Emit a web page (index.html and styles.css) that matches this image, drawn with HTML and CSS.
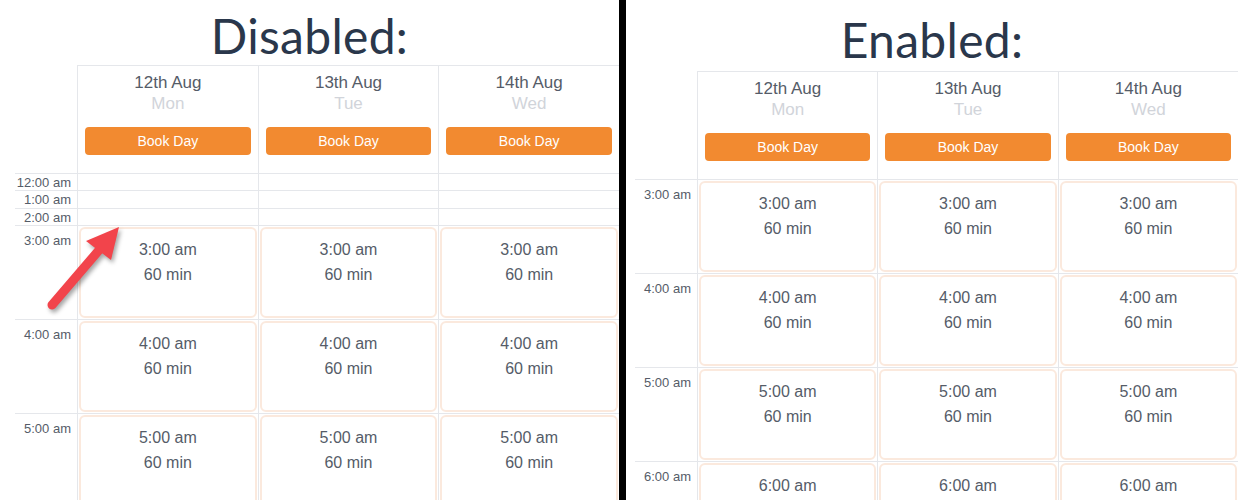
FILE: index.html
```html
<!DOCTYPE html>
<html lang="en">
<head>
    <meta charset="UTF-8">
    <title>Book Day - disabled vs enabled</title>
    <link rel="stylesheet" href="styles.css">
</head>
<body>
    <div class="page">
        <!-- left: empty slots hidden off -->
        <div class="panel panel-left">
            <h1 class="title">Disabled:</h1>
            <div class="cal">
                <div class="corner"></div>
                <div class="day-head">
                    <div class="date">12th Aug</div>
                    <div class="weekday">Mon</div>
                    <button class="book-btn">Book Day</button>
                </div>
                <div class="day-head">
                    <div class="date">13th Aug</div>
                    <div class="weekday">Tue</div>
                    <button class="book-btn">Book Day</button>
                </div>
                <div class="day-head">
                    <div class="date">14th Aug</div>
                    <div class="weekday">Wed</div>
                    <button class="book-btn">Book Day</button>
                </div>

                <div class="time time-small">12:00 am</div>
                <div class="cell cell-small"></div>
                <div class="cell cell-small"></div>
                <div class="cell cell-small"></div>

                <div class="time time-small">1:00 am</div>
                <div class="cell cell-small"></div>
                <div class="cell cell-small"></div>
                <div class="cell cell-small"></div>

                <div class="time time-small">2:00 am</div>
                <div class="cell cell-small"></div>
                <div class="cell cell-small"></div>
                <div class="cell cell-small"></div>

                <div class="time">3:00 am</div>
                <div class="cell"><div class="slot">3:00 am<br>60 min</div></div>
                <div class="cell"><div class="slot">3:00 am<br>60 min</div></div>
                <div class="cell"><div class="slot">3:00 am<br>60 min</div></div>

                <div class="time">4:00 am</div>
                <div class="cell"><div class="slot">4:00 am<br>60 min</div></div>
                <div class="cell"><div class="slot">4:00 am<br>60 min</div></div>
                <div class="cell"><div class="slot">4:00 am<br>60 min</div></div>

                <div class="time">5:00 am</div>
                <div class="cell"><div class="slot">5:00 am<br>60 min</div></div>
                <div class="cell"><div class="slot">5:00 am<br>60 min</div></div>
                <div class="cell"><div class="slot">5:00 am<br>60 min</div></div>
            </div>

            <svg class="arrow" width="90" height="100" viewBox="0 0 90 100">
                <line x1="12" y1="90" x2="60" y2="34" stroke="#f2444b" stroke-width="9" stroke-linecap="round"/>
                <polygon points="79,12 46,26 71,45" fill="#f2444b"/>
            </svg>
        </div>

        <div class="divider"></div>

        <!-- right: empty slots hidden on -->
        <div class="panel panel-right">
            <h1 class="title">Enabled:</h1>
            <div class="cal">
                <div class="corner"></div>
                <div class="day-head">
                    <div class="date">12th Aug</div>
                    <div class="weekday">Mon</div>
                    <button class="book-btn">Book Day</button>
                </div>
                <div class="day-head">
                    <div class="date">13th Aug</div>
                    <div class="weekday">Tue</div>
                    <button class="book-btn">Book Day</button>
                </div>
                <div class="day-head">
                    <div class="date">14th Aug</div>
                    <div class="weekday">Wed</div>
                    <button class="book-btn">Book Day</button>
                </div>

                <div class="time">3:00 am</div>
                <div class="cell"><div class="slot">3:00 am<br>60 min</div></div>
                <div class="cell"><div class="slot">3:00 am<br>60 min</div></div>
                <div class="cell"><div class="slot">3:00 am<br>60 min</div></div>

                <div class="time">4:00 am</div>
                <div class="cell"><div class="slot">4:00 am<br>60 min</div></div>
                <div class="cell"><div class="slot">4:00 am<br>60 min</div></div>
                <div class="cell"><div class="slot">4:00 am<br>60 min</div></div>

                <div class="time">5:00 am</div>
                <div class="cell"><div class="slot">5:00 am<br>60 min</div></div>
                <div class="cell"><div class="slot">5:00 am<br>60 min</div></div>
                <div class="cell"><div class="slot">5:00 am<br>60 min</div></div>

                <div class="time">6:00 am</div>
                <div class="cell"><div class="slot">6:00 am<br>60 min</div></div>
                <div class="cell"><div class="slot">6:00 am<br>60 min</div></div>
                <div class="cell"><div class="slot">6:00 am<br>60 min</div></div>
            </div>
        </div>
    </div>
</body>
</html>
```

FILE: styles.css
```css
html, body {
    margin: 0;
    padding: 0;
    background: #fff;
}

body {
    font-family: 'Liberation Sans', Arial, sans-serif;
    color: #555c68;
}

.page {
    display: flex;
    height: 100vh;
    overflow: hidden;
}

.panel {
    position: relative;
    padding-left: 15px;
}

.panel-left {
    width: 604px;
}

.panel-right {
    flex: 1;
    padding-left: 9px;
    padding-right: 2px;
}

.divider {
    width: 7px;
    background: #000;
}

.title {
    font-family: Lato, 'Open Sans', sans-serif;
    font-weight: normal;
    font-size: 48px;
    line-height: 58px;
    color: #2a374b;
    text-align: center;
    margin: 0;
    padding-top: 7px;
    letter-spacing: 0.3px;
}

.panel-left .title {
    margin-left: -15px;
}

.panel-right .title {
    margin-left: -9px;
    padding-top: 11px;
    margin-bottom: 2px;
}

.cal {
    display: grid;
    grid-template-columns: 62px repeat(3, 1fr);
}

.corner {
    border-bottom: 1px solid #e5e7eb;
}

.day-head {
    border-top: 1px solid #e5e7eb;
    border-left: 1px solid #e5e7eb;
    border-bottom: 1px solid #e5e7eb;
    text-align: center;
    padding: 6px 7px 18px;
}

.date {
    font-size: 17px;
    line-height: 21px;
}

.weekday {
    font-size: 17px;
    line-height: 21px;
    color: #d1d4da;
}

.book-btn {
    display: block;
    width: 100%;
    height: 28px;
    margin-top: 13px;
    background: #f28a30;
    color: #fff;
    border: none;
    border-radius: 4px;
    font-family: 'Liberation Sans', Arial, sans-serif;
    font-size: 14px;
    cursor: pointer;
}

.time {
    font-size: 13px;
    line-height: 16px;
    text-align: right;
    padding: 7px 6px 0 0;
    height: 86px;
    border-bottom: 1px solid #e5e7eb;
}

.time-small {
    height: 16.4px;
    line-height: 18px;
    padding-top: 0;
}

.cell {
    height: 93px;
    border-left: 1px solid #e5e7eb;
    border-bottom: 1px solid #e5e7eb;
}

.cell-small {
    height: 16.4px;
}

.slot {
    margin: 1px;
    height: 91px;
    box-sizing: border-box;
    border: 2px solid #fbe9dd;
    border-radius: 6px;
    text-align: center;
    font-size: 16px;
    line-height: 25px;
    padding-top: 8px;
}

.arrow {
    position: absolute;
    left: 40px;
    top: 215px;
    filter: drop-shadow(2px 3px 2px rgba(0, 0, 0, 0.35));
}
```
